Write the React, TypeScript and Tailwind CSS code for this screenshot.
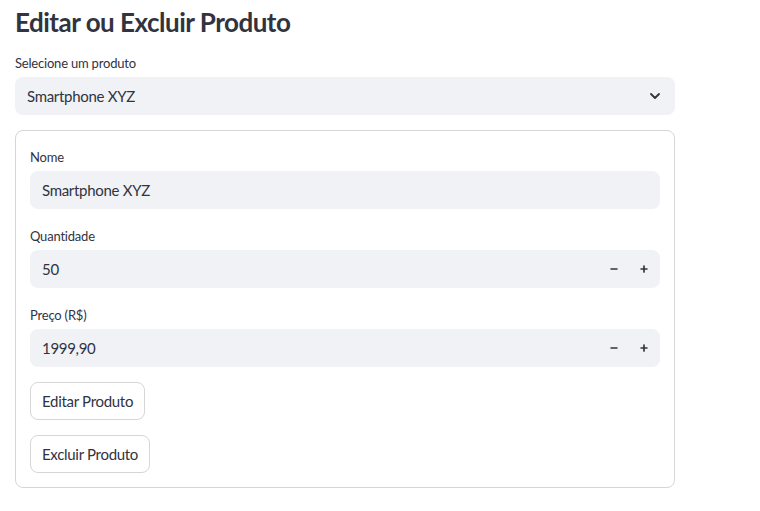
import { ChevronDown, Minus, Plus } from "lucide-react";

const font = { fontFamily: '"Source Sans Pro", Lato, "Noto Sans", sans-serif' };

function Label({ text }: { text: string }) {
    return <div className="text-[13px] tracking-[-0.2px] leading-[20px] text-[#31333F] mb-[4px]">{text}</div>;
}

function NumberInput({ label, value }: { label: string; value: string }) {
    return (
        <div>
            <Label text={label} />
            <div className="h-[38px] rounded-[8px] bg-[#F0F2F6] flex items-center pl-[12px] pr-[1px]">
                <span className="flex-1 text-[15px] tracking-[-0.3px] text-[#31333F]">{value}</span>
                <button className="w-[30px] h-full flex items-center justify-center text-[#31333F]">
                    <Minus size={10} strokeWidth={4} />
                </button>
                <button className="w-[30px] h-full flex items-center justify-center text-[#31333F]">
                    <Plus size={10} strokeWidth={4} />
                </button>
            </div>
        </div>
    );
}

export default function App() {
    return (
        <div className="min-h-screen bg-white pl-[15px] pt-[6px]" style={font}>
            <div className="w-[660px]">
                <h1 className="text-[26px] tracking-[-0.5px] leading-[32px] font-bold text-[#31333F] mb-[15px]">
                    Editar ou Excluir Produto
                </h1>

                <Label text="Selecione um produto" />
                <div className="h-[38px] rounded-[8px] bg-[#F0F2F6] flex items-center justify-between pl-[12px] pr-[12px] mb-[15px]">
                    <span className="text-[15px] tracking-[-0.3px] text-[#31333F]">Smartphone XYZ</span>
                    <ChevronDown size={16} strokeWidth={2.75} className="text-[#31333F]" />
                </div>

                <div className="border border-[#D6D6D9] rounded-[8px] px-[14px] pt-[16px] pb-[14px] flex flex-col">
                    <div className="flex flex-col gap-[17px]">
                        <div>
                            <Label text="Nome" />
                            <div className="h-[38px] rounded-[8px] bg-[#F0F2F6] flex items-center px-[12px]">
                                <span className="text-[15px] tracking-[-0.3px] text-[#31333F]">Smartphone XYZ</span>
                            </div>
                        </div>
                        <NumberInput label="Quantidade" value="50" />
                        <NumberInput label="Preço (R$)" value="1999,90" />
                    </div>
                    <div className="flex flex-col items-start gap-[15px] mt-[15px]">
                        <button className="h-[38px] px-[11px] rounded-[8px] border border-[#D6D6D9] bg-white text-[15px] tracking-[-0.3px] text-[#31333F]">
                            Editar Produto
                        </button>
                        <button className="h-[38px] px-[11px] rounded-[8px] border border-[#D6D6D9] bg-white text-[15px] tracking-[-0.3px] text-[#31333F]">
                            Excluir Produto
                        </button>
                    </div>
                </div>
            </div>
        </div>
    );
}
